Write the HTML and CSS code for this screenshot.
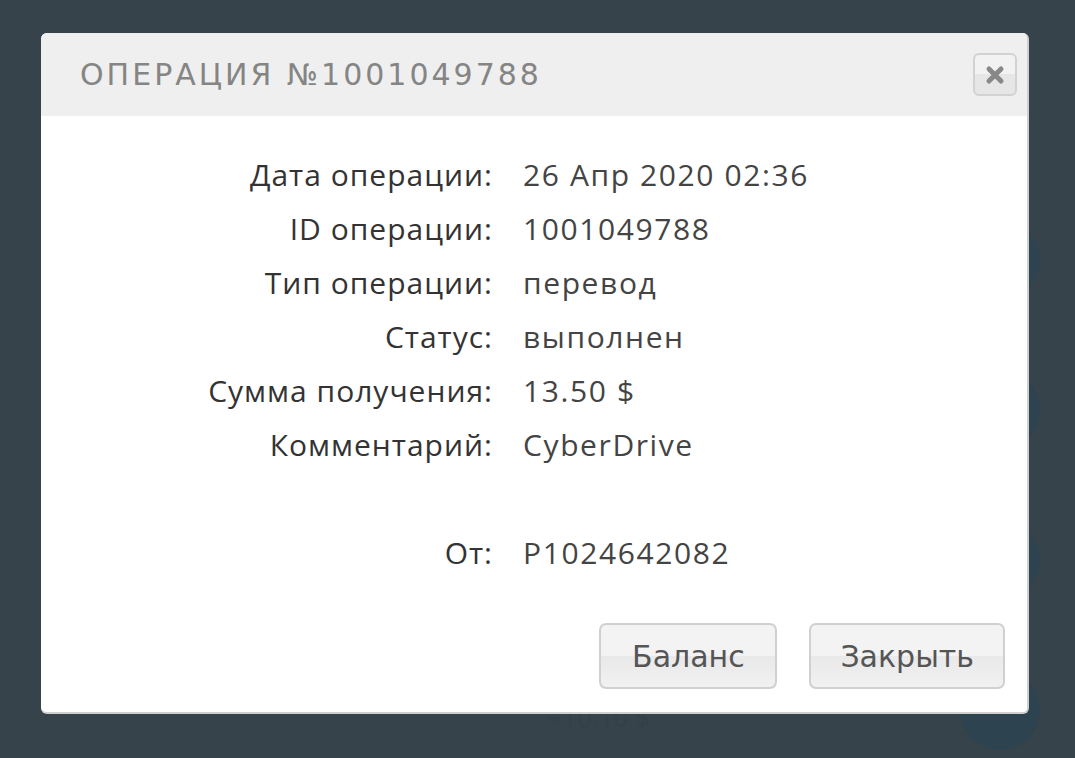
FILE: index.html
```html
<!DOCTYPE html>
<html lang="ru">
<head>
  <meta charset="UTF-8">
  <title>Операция</title>
  <link rel="stylesheet" href="styles.css">
</head>
<body>
  <div id="backdrop">
    <div class="bg-row"><span class="bg-circle"></span></div>
    <div class="bg-row"><span class="bg-circle"></span></div>
    <div class="bg-row"><span class="bg-circle"></span></div>
    <div class="bg-row"><span class="bg-amount">+10.10 $</span><span class="bg-circle"></span></div>
  </div>

  <div id="modal">
    <div class="modal-header">
      <h2>Операция №1001049788</h2>
      <button class="close-btn" title="Закрыть">
        <svg width="20" height="20" viewBox="0 0 20 20">
          <path d="M4 4 L16 16 M16 4 L4 16" stroke="#888" stroke-width="5" stroke-linecap="round"/>
        </svg>
      </button>
    </div>

    <div class="modal-body">
      <div class="info">
        <div class="label">Дата операции:</div><div class="value">26 Апр 2020 02:36</div>
        <div class="label">ID операции:</div><div class="value">1001049788</div>
        <div class="label">Тип операции:</div><div class="value">перевод</div>
        <div class="label">Статус:</div><div class="value">выполнен</div>
        <div class="label">Сумма получения:</div><div class="value">13.50 $</div>
        <div class="label">Комментарий:</div><div class="value">CyberDrive</div>
        <div class="spacer"></div>
        <div class="label">От:</div><div class="value">P1024642082</div>
      </div>

      <div class="actions">
        <button class="btn">Баланс</button>
        <button class="btn">Закрыть</button>
      </div>
    </div>
  </div>
</body>
</html>
```

FILE: styles.css
```css
body {
  margin: 0;
  width: 1075px;
  height: 758px;
  overflow: hidden;
  position: relative;
  background: #37434b;
  font-family: "Open Sans", Arial, sans-serif;
}

#backdrop {
  display: flex;
  flex-direction: column;
  gap: 70px;
  padding-top: 220px;
}

.bg-row {
  display: flex;
  align-items: center;
  justify-content: flex-end;
  padding-right: 35px;
  height: 80px;
}

.bg-circle {
  width: 80px;
  height: 80px;
  border-radius: 50%;
  background: #2e4350;
}

.bg-amount {
  margin-right: 310px;
  margin-top: 14px;
  font-size: 26px;
  color: #343f47;
}

#modal {
  position: absolute;
  left: 41px;
  top: 33px;
  width: 986px;
  background: #fff;
  border-radius: 6px;
  border-right: 2px solid #cfcfcf;
  border-bottom: 2px solid #cfcfcf;
  overflow: hidden;
}

.modal-header {
  height: 83px;
  background: #efefef;
  display: flex;
  align-items: center;
  justify-content: space-between;
  padding: 0 10px 0 39px;
}

.modal-header h2 {
  margin: 0;
  font-family: "DejaVu Sans", sans-serif;
  font-weight: normal;
  font-size: 30px;
  letter-spacing: 3px;
  text-transform: uppercase;
  color: #858585;
}

.close-btn {
  width: 44px;
  height: 43px;
  border: 2px solid #d2d2d2;
  border-radius: 6px;
  background: linear-gradient(#f2f2f2 50%, #e6e6e6 50%);
  display: flex;
  align-items: center;
  justify-content: center;
  padding: 0;
}

.modal-body {
  padding-top: 42px;
}

.info {
  display: grid;
  grid-template-columns: 451px 1fr;
  column-gap: 31px;
  grid-auto-rows: 54px;
  font-size: 30px;
  line-height: 34px;
  color: #333;
}

.label {
  text-align: right;
  letter-spacing: 1px;
  margin-right: -1px;
  color: #333;
}

.value {
  letter-spacing: 1.6px;
  color: #444;
}

.spacer {
  grid-column: 1 / 3;
}

.actions {
  display: flex;
  justify-content: flex-end;
  gap: 32px;
  padding: 33px 22px 23px 0;
}

.btn {
  height: 66px;
  min-width: 178px;
  padding: 0 29px;
  border: 2px solid #d0d0d0;
  border-radius: 7px;
  background: linear-gradient(#f3f3f3 50%, #e9e9e9 50%, #f1f1f1);
  font-family: "DejaVu Sans", sans-serif;
  font-size: 30px;
  color: #555;
}
```
